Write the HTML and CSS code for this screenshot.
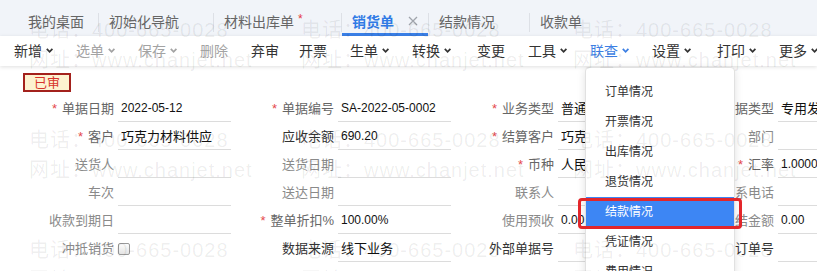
FILE: index.html
```html
<!DOCTYPE html>
<html lang="zh-CN">
<head>
<meta charset="utf-8">
<title>销货单</title>
<link rel="stylesheet" href="styles.css">
</head>
<body>
<div class="page">
  <div class="tabbar">
    <div class="tab tab-home">我的桌面</div>
    <span class="tab-sep"></span>
    <div class="tab">初始化导航<span class="tab-close"></span></div>
    <span class="tab-sep"></span>
    <div class="tab">材料出库单<span class="tab-star">*</span><span class="tab-close"></span></div>
    <span class="tab-sep"></span>
    <div class="tab tab-active">销货单<span class="tab-close tab-close-show"><svg width="10" height="10" viewBox="0 0 10 10"><path d="M1 1L9 9M9 1L1 9" stroke="#a0a4ab" stroke-width="1.3" fill="none"/></svg></span></div>
    <span class="tab-sep"></span>
    <div class="tab">结款情况<span class="tab-close"></span></div>
    <span class="tab-sep"></span>
    <div class="tab">收款单<span class="tab-close"></span></div>
  </div>

  <div class="toolbar">
    <div class="tool">新增<svg class="chev" width="10" height="6" viewBox="0 0 10 6"><path d="M0.8 0.8L3.6 3.8L6.4 0.8" /></svg></div>
    <div class="tool tool-off">选单<svg class="chev" width="10" height="6" viewBox="0 0 10 6"><path d="M0.8 0.8L3.6 3.8L6.4 0.8" /></svg></div>
    <div class="tool tool-off">保存<svg class="chev" width="10" height="6" viewBox="0 0 10 6"><path d="M0.8 0.8L3.6 3.8L6.4 0.8" /></svg></div>
    <div class="tool tool-off">删除</div>
    <span class="tool-sep"></span>
    <div class="tool">弃审</div>
    <div class="tool">开票</div>
    <span class="tool-sep"></span>
    <div class="tool">生单<svg class="chev" width="10" height="6" viewBox="0 0 10 6"><path d="M0.8 0.8L3.6 3.8L6.4 0.8" /></svg></div>
    <div class="tool">转换<svg class="chev" width="10" height="6" viewBox="0 0 10 6"><path d="M0.8 0.8L3.6 3.8L6.4 0.8" /></svg></div>
    <span class="tool-sep"></span>
    <div class="tool">变更</div>
    <span class="tool-sep"></span>
    <div class="tool">工具<svg class="chev" width="10" height="6" viewBox="0 0 10 6"><path d="M0.8 0.8L3.6 3.8L6.4 0.8" /></svg></div>
    <div class="tool tool-on">联查<svg class="chev" width="10" height="6" viewBox="0 0 10 6"><path d="M0.8 0.8L3.6 3.8L6.4 0.8" /></svg></div>
    <div class="tool">设置<svg class="chev" width="10" height="6" viewBox="0 0 10 6"><path d="M0.8 0.8L3.6 3.8L6.4 0.8" /></svg></div>
    <span class="tool-sep"></span>
    <div class="tool">打印<svg class="chev" width="10" height="6" viewBox="0 0 10 6"><path d="M0.8 0.8L3.6 3.8L6.4 0.8" /></svg></div>
    <div class="tool">更多<svg class="chev" width="10" height="6" viewBox="0 0 10 6"><path d="M0.8 0.8L3.6 3.8L6.4 0.8" /></svg></div>
  </div>

  <div class="form">
    <div class="badge">已审</div>
    <div class="grid">
      <div class="field"><label class="lbl req"><i>*</i>单据日期</label><div class="val num">2022-05-12</div></div>
      <div class="field"><label class="lbl req"><i>*</i>单据编号</label><div class="val num">SA-2022-05-0002</div></div>
      <div class="field"><label class="lbl req"><i>*</i>业务类型</label><div class="val">普通销售</div></div>
      <div class="field"><label class="lbl req"><i>*</i>单据类型</label><div class="val">专用发票</div></div>

      <div class="field"><label class="lbl req"><i>*</i>客户</label><div class="val">巧克力材料供应</div></div>
      <div class="field"><label class="lbl dark">应收余额</label><div class="val num">690.20</div></div>
      <div class="field"><label class="lbl req"><i>*</i>结算客户</label><div class="val">巧克力材料供应</div></div>
      <div class="field"><label class="lbl">部门</label><div class="val"></div></div>

      <div class="field"><label class="lbl">送货人</label><div class="val"></div></div>
      <div class="field"><label class="lbl">送货日期</label><div class="val"></div></div>
      <div class="field"><label class="lbl req"><i>*</i>币种</label><div class="val">人民币</div></div>
      <div class="field"><label class="lbl req"><i>*</i>汇率</label><div class="val num">1.0000</div></div>

      <div class="field"><label class="lbl">车次</label><div class="val"></div></div>
      <div class="field"><label class="lbl">送达日期</label><div class="val"></div></div>
      <div class="field"><label class="lbl">联系人</label><div class="val"></div></div>
      <div class="field"><label class="lbl">联系电话</label><div class="val"></div></div>

      <div class="field"><label class="lbl">收款到期日</label><div class="val"></div></div>
      <div class="field"><label class="lbl req"><i>*</i>整单折扣%</label><div class="val num">100.00%</div></div>
      <div class="field"><label class="lbl">使用预收</label><div class="val num">0.00</div></div>
      <div class="field"><label class="lbl">现结金额</label><div class="val num">0.00</div></div>

      <div class="field"><label class="lbl">冲抵销货</label><div class="val val-check"><span class="check"></span></div></div>
      <div class="field"><label class="lbl dark">数据来源</label><div class="val">线下业务</div></div>
      <div class="field"><label class="lbl dark">外部单据号</label><div class="val"></div></div>
      <div class="field"><label class="lbl dark">销售订单号</label><div class="val"></div></div>
    </div>
  </div>

  <div class="dropdown">
    <div class="dd-item">订单情况</div>
    <div class="dd-item">开票情况</div>
    <div class="dd-item">出库情况</div>
    <div class="dd-item">退货情况</div>
    <div class="dd-item dd-item-on">结款情况</div>
    <div class="dd-item">凭证情况</div>
    <div class="dd-item">费用情况</div>
  </div>
  <div class="annot"></div>

  <div class="watermark">
    <div class="wm"><div>电话：400-665-0028</div><div>网址：www.chanjet.net</div></div>
    <div class="wm"><div>电话：400-665-0028</div><div>网址：www.chanjet.net</div></div>
    <div class="wm"><div>电话：400-665-0028</div><div>网址：www.chanjet.net</div></div>
    <div class="wm"><div>电话：400-665-0028</div><div>网址：www.chanjet.net</div></div>
    <div class="wm"><div>电话：400-665-0028</div><div>网址：www.chanjet.net</div></div>
    <div class="wm"><div>电话：400-665-0028</div><div>网址：www.chanjet.net</div></div>
    <div class="wm"><div>电话：400-665-0028</div><div>网址：www.chanjet.net</div></div>
    <div class="wm"><div>电话：400-665-0028</div><div>网址：www.chanjet.net</div></div>
    <div class="wm"><div>电话：400-665-0028</div><div>网址：www.chanjet.net</div></div>
  </div>
</div>
</body>
</html>
```

FILE: styles.css
```css
* { box-sizing: border-box; }
html, body { margin: 0; padding: 0; }
body {
  width: 817px;
  height: 271px;
  overflow: hidden;
  background: #fff;
  font-family: "Liberation Sans", "Noto Sans CJK SC", sans-serif;
  color: #333;
}
.page {
  position: relative;
  width: 817px;
  height: 271px;
  overflow: hidden;
}

/* tabs */
.tabbar {
  display: flex;
  height: 36px;
  padding-left: 17px;
  background: #f1f4f9;
  white-space: nowrap;
}
.tab {
  display: flex;
  align-items: center;
  height: 36px;
  padding: 8px 10px 0 10px;
  border-bottom: 3px solid transparent;
  font-size: 14px;
  color: #666;
}
.tab-home { padding-left: 11px; padding-right: 14px; }
.tab-active {
  color: #2f7ae5;
  font-weight: bold;
  border-bottom-color: #3a80e8;
}
.tab-star {
  color: #e5393e;
  font-size: 12px;
  width: 6px;
  margin: 0 3px 4px 4px;
  font-weight: normal;
}
.tab-close {
  display: flex;
  width: 10px;
  height: 10px;
  margin-left: 14px;
}
.tab-sep {
  width: 1px;
  height: 19px;
  margin-top: 13px;
  background: #dde0e6;
}

/* toolbar */
.toolbar {
  display: flex;
  align-items: center;
  height: 30px;
  padding-left: 4px;
  background: #fff;
  box-shadow: 0 1px 4px rgba(0, 0, 0, 0.13);
  position: relative;
  white-space: nowrap;
}
.tool {
  display: flex;
  align-items: center;
  padding: 0 10px;
  font-size: 14px;
  line-height: 30px;
  color: #333;
}
.tool-off { color: #a3a3a3; }
.tool-on { color: #3d7fe3; }
.chev {
  margin-left: 4px;
  fill: none;
  stroke: currentColor;
  stroke-width: 1.7;
}
.tool-off .chev { stroke: #a3a3a3; }
.tool-sep {
  width: 1px;
  height: 14px;
  margin: 2px 2px 0 1px;
  background: #dadada;
}

/* form */
.form {
  padding: 7px 0 0 14px;
}
.badge {
  width: 48px;
  height: 19px;
  margin-left: 9px;
  border: 2px solid #a3211c;
  background: #fdf2d0;
  color: #d8342c;
  font-size: 13px;
  line-height: 15px;
  text-align: center;
}
.grid {
  display: grid;
  grid-template-columns: repeat(4, 220px);
  grid-auto-rows: 28px;
  margin-top: 2px;
  width: 880px;
}
.field {
  display: flex;
  height: 28px;
}
.lbl {
  width: 100px;
  text-align: right;
  font-size: 13px;
  line-height: 30px;
  color: #8a8a8a;
  white-space: nowrap;
}
.lbl i {
  font-style: normal;
  color: #e5484d;
  margin-right: 5px;
}
.lbl.req { color: #666; }
.lbl.dark { color: #333; }
.val {
  width: 113px;
  height: 28px;
  margin-left: 4px;
  padding-left: 3px;
  border-bottom: 1px solid #dcdcdc;
  font-size: 13px;
  line-height: 29px;
  color: #111;
  white-space: nowrap;
  overflow: hidden;
}
.val.num { font-size: 12px; }
.val-check {
  border-bottom: none;
  padding-left: 0;
  display: flex;
  align-items: center;
  padding-top: 1px;
}
.check {
  width: 12px;
  height: 12px;
  border: 1px solid #9a9a9a;
  border-radius: 2px;
  background: linear-gradient(#fdfdfd, #e4e4e4);
}

/* dropdown overlay */
.dropdown {
  position: absolute;
  left: 585px;
  top: 67px;
  width: 150px;
  height: 240px;
  padding-top: 9px;
  background: #fff;
  border: 1px solid #e1e1e1;
  border-radius: 4px;
  box-shadow: 0 2px 8px rgba(0, 0, 0, 0.12);
}
.dd-item {
  height: 30px;
  line-height: 30px;
  padding-left: 19px;
  font-size: 12px;
  color: #333;
}
.dd-item-on {
  background: #3d86f4;
  color: #fff;
}
.annot {
  position: absolute;
  left: 578px;
  top: 198px;
  width: 164px;
  height: 31px;
  border: 3px solid #e3262a;
  border-radius: 4px;
}

/* watermark overlay */
.watermark {
  position: absolute;
  left: 29px;
  top: 0;
  width: 900px;
  display: grid;
  grid-template-columns: repeat(3, 272px);
  grid-auto-rows: 110px;
  pointer-events: none;
}
.wm {
  padding-top: 15px;
  font-size: 20px;
  line-height: 30px;
  letter-spacing: 1px;
  color: rgba(0, 0, 0, 0.07);
  white-space: nowrap;
}
```
